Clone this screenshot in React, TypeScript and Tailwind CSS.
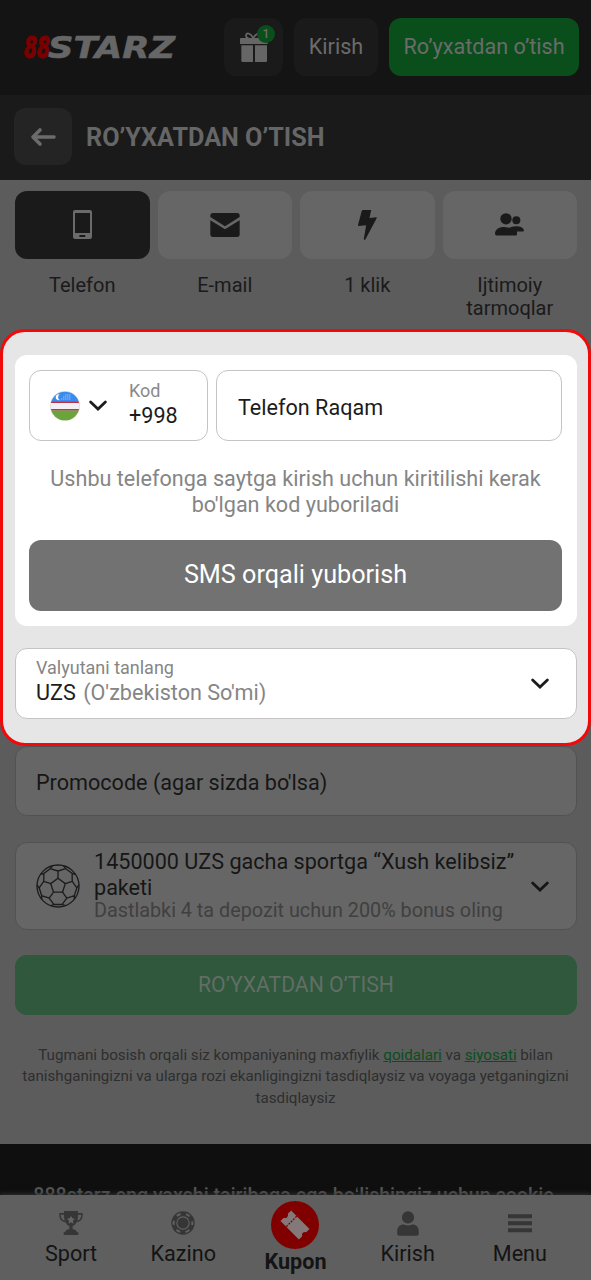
import React from 'react';

const ChevronDown: React.FC<{ className?: string }> = ({ className = '' }) => (
  <svg viewBox="0 0 20 13" className={`w-5 h-[13px] shrink-0 ${className}`} fill="none" stroke="currentColor" strokeWidth="2.8" strokeLinecap="round" strokeLinejoin="miter">
    <path d="M2.600 3L10 10l7.400-7" />
  </svg>
);

const Logo: React.FC = () => (
  <svg width="156" height="34" viewBox="0 0 156 34" fontFamily="'DejaVu Sans', sans-serif" fontWeight="700" fontStyle="italic">
    <text x="1" y="28" fontSize="31" textLength="26" lengthAdjust="spacingAndGlyphs" fill="#7a0000" stroke="#7a0000" strokeWidth="1.2">88</text>
    <text x="25" y="28" fontSize="31" textLength="127" lengthAdjust="spacingAndGlyphs" fill="#666" stroke="#666" strokeWidth="0.6">STARZ</text>
  </svg>
);

const GiftIcon: React.FC = () => (
  <svg width="28" height="30" viewBox="0 0 84 90">
    <path d="M40 22C28 22 16 18 18 9c3-8 15-6 22 10C47 3 59 1 62 9c2 9-10 13-22 13z" fill="none" stroke="#666" strokeWidth="5" />
    <path d="M3 18h77q3 0 3 3v15H0V21q0-3 3-3zM4 40h35v50H8q-4 0-4-4zM45 40h36v46q0 4-4 4H45z" fill="#666" />
  </svg>
);

const PhoneIcon: React.FC = () => (
  <svg width="19" height="29" viewBox="0 0 57 87" fill="#6b6b6b" fillRule="evenodd">
    <path d="M6 0h45q6 0 6 6v75q0 6-6 6H6q-6 0-6-6V6q0-6 6-6zM6 9v60h45V9zM20 75q-3 3 0 6h16q3-3 0-6z" />
  </svg>
);

const MailIcon: React.FC = () => (
  <svg width="30" height="24" viewBox="0 0 88 72" fill="#1a1a1a">
    <path d="M8 0h72q8 0 8 8v4L44 40 0 12V8q0-8 8-8z" />
    <path d="M0 22l44 27 44-27v42q0 8-8 8H8q-8 0-8-8z" />
  </svg>
);

const BoltIcon: React.FC = () => (
  <svg width="19" height="30" viewBox="0 0 56 88" fill="#1a1a1a">
    <path d="M15 0h24l-5 23 20-2q2 0 1 3L22 86q-3 3-5 0l7-41-22 2q-2 0-2-3L11 3q1-3 4-3z" />
  </svg>
);

const PeopleIcon: React.FC = () => (
  <svg width="29" height="23" viewBox="0 0 87 68" fill="#1a1a1a">
    <circle cx="33" cy="17" r="17" />
    <circle cx="64" cy="21" r="12" />
    <path d="M5 67q-5 0-5-5c0-15 15-22 32-20 8 1 14 3 19-1 14-4 34-1 36 11q0 3-4 3H66v9q0 3-3 3z" />
  </svg>
);

const Flag: React.FC = () => (
  <svg width="30" height="32" viewBox="0 0 90 96">
    <defs>
      <clipPath id="flag">
        <circle cx="45" cy="48" r="43" />
      </clipPath>
    </defs>
    <circle cx="45" cy="48" r="45" fill="#dcdcdc" />
    <g clipPath="url(#flag)">
      <rect width="90" height="37" fill="#3a8bee" />
      <rect y="37" width="90" height="23" fill="#f2f0f4" />
      <rect y="35" width="90" height="4" fill="#c22f44" />
      <rect y="57" width="90" height="5" fill="#a5453a" />
      <rect y="62" width="90" height="34" fill="#6ba43a" />
    </g>
    <path d="M29 13a9 9 0 1 0 0 17a10 10 0 0 1 0-17z" fill="#fff" />
    <g stroke="#b9d8fb" strokeWidth="3" strokeDasharray="3 3">
      <path d="M46 15h15M40 21h21M34 27h27" />
    </g>
  </svg>
);

const BallIcon: React.FC = () => (
  <svg width="44" height="44" viewBox="-66 -66 132 132" fill="none" stroke="#1c1c1c" strokeWidth="4" strokeLinejoin="round">
    <circle r="63" />
    {[0, 72, 144, 216, 288].map((angle) => (
      <path key={angle} transform={`rotate(${angle})`} d="M0-45V-23L21.900-7.100M-16-61L-23-52L0-45L23-52L16-61M23-52L42-38" />
    ))}
  </svg>
);

const TrophyIcon: React.FC = () => (
  <svg width="24" height="24" viewBox="0 0 72 72" fill="#363636">
    <path d="M15 0h42v6h14q2 26-18 28-4 8-12 11v10q10 0 13 9h4v8H14v-8h4q3-9 13-9V45q-8-3-12-11Q-1 32 1 6h14zM15 11H5q1 15 12 18-2-8-2-18zM57 11q0 10-2 18 11-3 12-18z" />
    <path d="M36 14l3.5 8 8.5 1-6.300 6 1.600 9-7.300-4.500L28.700 38l1.600-9L24 23l8.500-1z" fill="#656565" />
  </svg>
);

const ChipIcon: React.FC = () => (
  <svg width="24" height="24" viewBox="0 0 72 72" fill="none">
    <circle cx="36" cy="36" r="35" fill="#363636" />
    <circle cx="36" cy="36" r="28" stroke="#616161" strokeWidth="6" strokeDasharray="12.660 16.660" strokeDashoffset="6.330" />
    <circle cx="36" cy="36" r="18.500" stroke="#616161" strokeWidth="3.500" />
  </svg>
);

const CouponIcon: React.FC = () => (
  <svg width="48" height="48" viewBox="-24 -24 48 48">
    <circle r="24" fill="#800000" />
    <g transform="rotate(45)">
      <path d="M-13-7.500h26v4.700a3 3 0 0 0 0 5.600V7.500h-26V2.800a3 3 0 0 0 0-5.600z" fill="#857878" />
      <path d="M-5-7.500V7.500" stroke="#800000" strokeWidth="1.300" strokeDasharray="2 1.200" />
    </g>
  </svg>
);

const UserIcon: React.FC = () => (
  <svg width="22" height="25" viewBox="0 0 64 74" fill="#363636">
    <circle cx="32" cy="19" r="18" />
    <path d="M0 67V61C0 47 8 40 19 40q13 6 26 0c11 0 19 7 19 21v6q0 6-6 6H6q-6 0-6-6z" />
  </svg>
);

const MenuIcon: React.FC = () => (
  <svg width="24" height="20" viewBox="0 0 72 60" fill="#363636">
    <path d="M0 1h72v12H0zM0 22h72v12H0zM0 43h72v12H0z" />
  </svg>
);

const tabs = [
  { label: 'Telefon', icon: <PhoneIcon />, active: true },
  { label: 'E-mail', icon: <MailIcon />, active: false },
  { label: '1 klik', icon: <BoltIcon />, active: false },
  { label: 'Ijtimoiy tarmoqlar', icon: <PeopleIcon />, active: false },
];

const Header: React.FC = () => (
  <header className="h-[95px] shrink-0 bg-[#141414] flex items-start pl-[23px] pr-3 pt-[18px] text-[21.6px] text-[#6b6b6b]">
    <div className="h-[58px] flex items-center">
      <Logo />
    </div>
    <div className="ml-auto flex gap-[11px]">
      <button className="relative w-[59px] h-[58px] rounded-xl bg-[#1a1a1a] flex items-center justify-center">
        <GiftIcon />
        <span className="absolute top-[7px] right-2 w-[18px] h-[18px] rounded-full bg-[#0a4e1c] text-[12px] leading-[18px] font-medium text-center">1</span>
      </button>
      <button className="w-[84px] h-[58px] rounded-xl bg-[#1a1a1a]">Kirish</button>
      <button className="w-[190px] h-[58px] rounded-xl bg-[#0a4e1c] whitespace-nowrap">Ro’yxatdan o’tish</button>
    </div>
  </header>
);

const TitleBar: React.FC = () => (
  <div className="h-[85px] shrink-0 bg-[#1a1a1a] flex items-start pl-[14px] pt-[13px] gap-[14px]">
    <button className="w-[58px] h-[57px] rounded-xl bg-[#242424] flex items-center justify-center">
      <svg width="26" height="20" viewBox="0 0 26 20" fill="none" stroke="#6b6b6b" strokeWidth="3.600" strokeLinecap="round" strokeLinejoin="round">
        <path d="M24 10H3M10 3L3 10l7 7" />
      </svg>
    </button>
    <h1 className="pt-px text-[25.200px] leading-[57px] font-bold text-[#666]">RO’YXATDAN O’TISH</h1>
  </div>
);

const BottomNav: React.FC = () => (
  <nav className="h-[85px] shrink-0 bg-[#5f5f5f] px-[15px] grid grid-cols-5 text-center text-[21.6px] leading-[26px] text-[#141414] shadow-[0_-1px_5px_#333]">
    <div className="flex flex-col items-center">
      <div className="h-[46px] pt-4"><TrophyIcon /></div>
      <span>Sport</span>
    </div>
    <div className="flex flex-col items-center">
      <div className="h-[46px] pt-4"><ChipIcon /></div>
      <span>Kazino</span>
    </div>
    <div className="flex flex-col items-center">
      <div className="h-[54px] pt-[6px]"><CouponIcon /></div>
      <span className="font-bold">Kupon</span>
    </div>
    <div className="flex flex-col items-center">
      <div className="h-[46px] pt-4"><UserIcon /></div>
      <span>Kirish</span>
    </div>
    <div className="flex flex-col items-center">
      <div className="h-[46px] pt-[19px]"><MenuIcon /></div>
      <span>Menu</span>
    </div>
  </nav>
);

const App: React.FC = () => {
  return (
    <div className="w-[591px] h-[1280px] overflow-hidden flex flex-col bg-[#5c5c5c] font-['Roboto',sans-serif]">
      <Header />
      <TitleBar />

      <main className="h-[964px] shrink-0 flex flex-col">
        {/* Registration methods */}
        <div className="h-[149px] shrink-0 pl-[15px] pr-[14px] pt-[10.500px] grid grid-cols-4 gap-2">
          {tabs.map((tab) => (
            <div key={tab.label} className="text-center text-[20px] leading-[23px] text-[#1a1a1a]">
              <div className={`h-[68px] mb-[15px] rounded-xl flex items-center justify-center ${tab.active ? 'bg-[#1a1a1a]' : 'bg-[#666]'}`}>
                {tab.icon}
              </div>
              {tab.label}
            </div>
          ))}
        </div>

        {/* Phone and currency */}
        <section className="h-[417px] shrink-0 rounded-[25px] border-[3px] border-[#f20a0a] bg-[#e6e6e6] pl-3 pr-[11px] pt-[23px] text-[#1c1c1c]">
          <div className="h-[271px] rounded-xl bg-white p-[15px] pl-[14px]">
            <div className="flex gap-2">
              <div className="w-[179px] h-[71px] rounded-xl border-[1.500px] border-[#c4c4c4] flex items-center pl-5">
                <Flag />
                <ChevronDown className="ml-2" />
                <div className="ml-[21px] -mt-[3px]">
                  <div className="text-[18px] leading-[24px] text-[#8a8a8a]">Kod</div>
                  <div className="text-[21.6px] leading-[26px]">+998</div>
                </div>
              </div>
              <div className="flex-1 h-[71px] rounded-xl border-[1.500px] border-[#c4c4c4] flex items-center pl-[21px] pt-[5px] text-[21.6px]">Telefon Raqam</div>
            </div>
            <p className="mt-[25px] text-center text-[21.6px] leading-[26px] text-[#858585]">
              Ushbu telefonga saytga kirish uchun kiritilishi kerak
              <br />
              bo'lgan kod yuboriladi
            </p>
            <button className="mt-[22px] w-full h-[71px] pb-[2px] rounded-xl bg-[#727272] text-[25.200px] text-white">SMS orqali yuborish</button>
          </div>
          <div className="mt-[22px] h-[71px] rounded-xl border-[1.500px] border-[#c4c4c4] bg-white flex items-center justify-between pl-[20px] pr-[26px]">
            <div className="-mt-[5px]">
              <div className="text-[18px] leading-[24px] text-[#858585]">Valyutani tanlang</div>
              <div className="text-[21.6px] leading-[26px]">
                UZS <span className="ml-[2px] text-[#858585]">(O'zbekiston So'mi)</span>
              </div>
            </div>
            <ChevronDown />
          </div>
        </section>

        <div className="pl-[15px] pr-[14px]">
          <div className="h-[70px] rounded-xl border-[1.500px] border-[#525252] bg-[#666] flex items-center pl-[20px] pt-[4px] text-[21.6px] text-[#161616]">
            Promocode (agar sizda bo'lsa)
          </div>

          <div className="mt-[26px] h-[88px] rounded-xl border-[1.500px] border-[#525252] bg-[#666] flex items-center pl-[20px] pr-[26px] text-[#161616]">
            <BallIcon />
            <div className="ml-[14px] -mt-[2px] flex-1 text-[21.6px] leading-[26px]">
              1450000 UZS gacha sportga “Xush kelibsiz”
              <br />
              paketi
              <div className="-mt-px text-[19.800px] leading-[22px] text-[#404040]">Dastlabki 4 ta depozit uchun 200% bonus oling</div>
            </div>
            <ChevronDown />
          </div>

          <button className="mt-[25px] w-full h-[60px] rounded-xl bg-[#2f583c] text-[21.200px] text-[#626e65]">RO’YXATDAN O’TISH</button>
        </div>

        <p className="mt-[30px] text-center text-[15.150px] leading-[21.300px] text-[#2e2e2e]">
          Tugmani bosish orqali siz kompaniyaning maxfiylik <a className="text-[#0a4e1c] underline">qoidalari</a> va{' '}
          <a className="text-[#0a4e1c] underline">siyosati</a> bilan
          <br />
          tanishganingizni va ularga rozi ekanligingizni tasdiqlaysiz va voyaga yetganingizni
          <br />
          tasdiqlaysiz
        </p>
      </main>

      {/* Cookie notice, cut off by the bottom bar */}
      <div className="h-[51px] shrink-0 overflow-hidden bg-[#0f0f0f] pt-[39px] pr-1 text-center text-[19.600px] leading-[26px] font-medium text-[#555] whitespace-nowrap">
        888starz eng yaxshi tajribaga ega boʻlishingiz uchun cookie
      </div>
      <BottomNav />
    </div>
  );
};

export default App;
